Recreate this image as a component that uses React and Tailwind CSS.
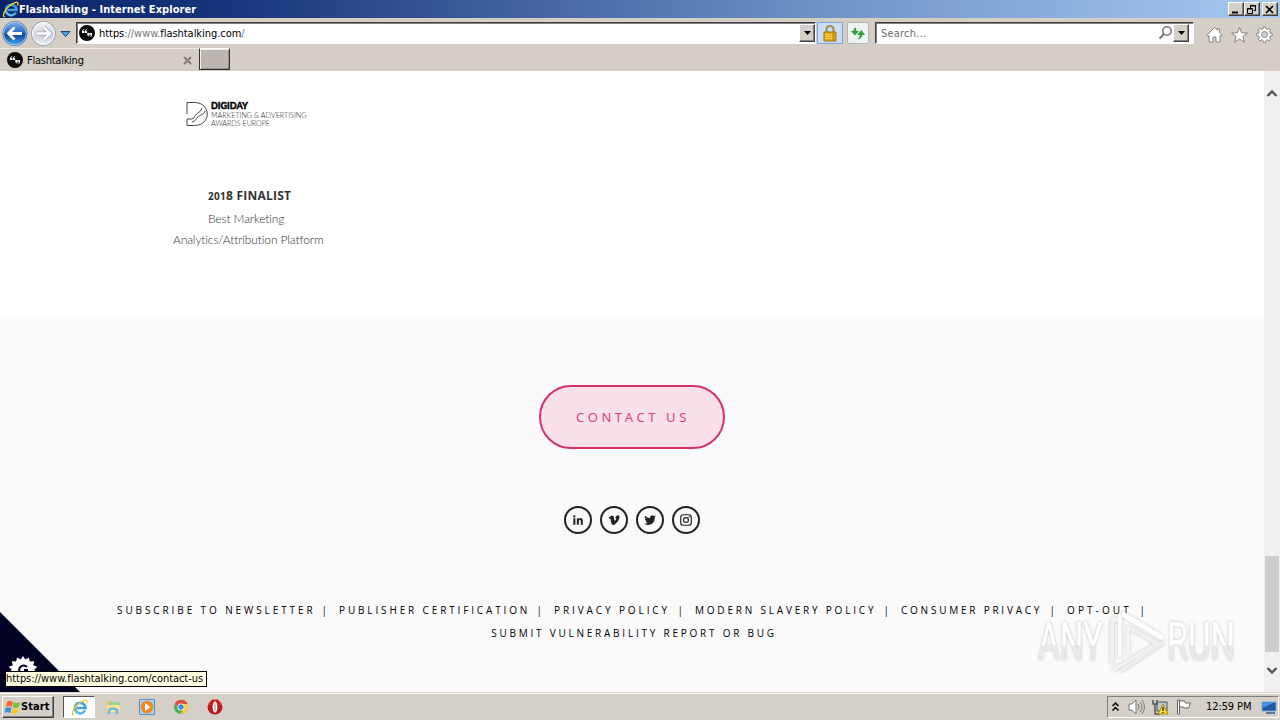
const footerLinks = [
  { label: 'SUBSCRIBE TO NEWSLETTER', width: 'w-[206px]', spacing: 'tracking-[2.9px]' },
  { label: 'PUBLISHER CERTIFICATION', width: 'w-[199px]', spacing: 'tracking-[2.86px]' },
  { label: 'PRIVACY POLICY', width: 'w-[125px]', spacing: 'tracking-[2.9px]' },
  { label: 'MODERN SLAVERY POLICY', width: 'w-[190px]', spacing: 'tracking-[2.8px]' },
  { label: 'CONSUMER PRIVACY', width: 'w-[150px]', spacing: 'tracking-[2.77px]' },
  { label: 'OPT-OUT', width: 'w-[74px]', spacing: 'tracking-[3.1px]' },
]

const raised =
  'border border-t-white border-l-white border-r-[#404040] border-b-[#404040] bg-[#d4d0c8] shadow-[inset_-1px_-1px_0_#808080]'

function IeLogo({ size }) {
  return (
    <svg width={size} height={size} viewBox="0 0 18 18" className="shrink-0">
      <path
        d="M14.700 12.200A5.600 5.600 0 1 1 15.300 9.500H6"
        fill="none"
        stroke="#3d9fdf"
        strokeWidth="2.800"
      />
      <path d="M13.500 13A5.500 5.500 0 0 1 4 11.500" fill="none" stroke="#8adcf8" strokeWidth="1" />
      <path
        d="M3.200 16.600C-.5 17 2.200 9.500 8 5c4-3.200 8.500-4.700 9-2.800.2.900-.2 1.800-.8 2.700"
        fill="none"
        stroke="#f0c93a"
        strokeWidth="1.400"
      />
    </svg>
  )
}

function SiteIcon() {
  return (
    <svg width="16" height="16" viewBox="0 0 16 16" className="shrink-0">
      <circle cx="8" cy="8" r="8" fill="#080808" />
      <path
        d="M5.200 4C3.700 4.500 3 5.500 3 7v1h2.300V6H4.200c.1-.7.5-1.100 1-1.300zM8 4c-1.500.5-2.200 1.500-2.200 3v1h2.300V6H7c.1-.7.5-1.100 1-1.300zM10.200 12c-1 .1-.9-.8 0-1.600H8.300V8h2.400v1.400c0 1.400-.6 2.200-1.700 2.700zM13 8v1.400c0 1.500-.6 2.300-1.700 2.800v-.8c.6-.3.8-.6.9-1.100h-1V8z"
        fill="#fff"
      />
    </svg>
  )
}

function WindowButton({ children }) {
  return (
    <span className={`flex h-[14px] w-4 items-center justify-center ${raised}`}>
      <svg width="12" height="11" viewBox="0 0 12 11" fill="none" stroke="#000">
        {children}
      </svg>
    </span>
  )
}

function DropButton() {
  return (
    <span className={`flex h-[18px] w-4 shrink-0 items-center justify-center ${raised}`}>
      <svg width="7" height="4" viewBox="0 0 7 4">
        <path d="M0 0h7L3.500 4z" fill="#000" />
      </svg>
    </span>
  )
}

function TitleBar() {
  return (
    <header className="flex h-[18px] shrink-0 items-center bg-[linear-gradient(90deg,#0a246a_0%,#16357b_18%,#7194c8_65%,#a6caf0_100%)] pr-[2px] pl-[2px]">
      <IeLogo size={17} />
      <span className="pt-[2px] text-[11px] font-bold tracking-[0.05px] text-white">
        Flashtalking - Internet Explorer
      </span>
      <div className="ml-auto flex">
        <WindowButton>
          <path d="M2 8.500h6" strokeWidth="2" />
        </WindowButton>
        <WindowButton>
          <path d="M4.500 4V1.500h5v5H7.500M4 2h6M1.500 4.500h5v5h-5zM1 5h6" />
        </WindowButton>
        <span className="w-[2px]" />
        <WindowButton>
          <path d="M2 2l7 7M9 2L2 9" strokeWidth="1.700" />
        </WindowButton>
      </div>
    </header>
  )
}

function NavArrows() {
  return (
    <svg width="76" height="30" viewBox="0 0 76 30" className="shrink-0">
      <defs>
        <linearGradient id="back" x1="0" y1="0" x2="0" y2="1">
          <stop offset="0" stopColor="#86b4e8" />
          <stop offset=".45" stopColor="#2b6cc4" />
          <stop offset=".55" stopColor="#0b4299" />
          <stop offset="1" stopColor="#4fb0f5" />
        </linearGradient>
        <linearGradient id="forward" x1="0" y1="0" x2="0" y2="1">
          <stop offset="0" stopColor="#f3f4f6" />
          <stop offset=".6" stopColor="#cbd2dc" />
          <stop offset="1" stopColor="#eef3f9" />
        </linearGradient>
      </defs>
      <circle cx="15" cy="15.500" r="12.200" fill="url(#back)" stroke="#6d86a8" />
      <circle cx="15" cy="15.500" r="11.300" fill="none" stroke="#b9d4f3" strokeWidth=".8" />
      <path d="M22 15.500H9M14.500 9.500l-6 6 6 6" fill="none" stroke="#fff" strokeWidth="2.800" />
      <circle cx="43.500" cy="15.500" r="12" fill="url(#forward)" stroke="#8d98a8" />
      <circle cx="43.500" cy="15.500" r="11" fill="none" stroke="#fff" />
      <path d="M37 15.500h12M44 9.500l6 6-6 6" fill="none" stroke="#9aa6b6" strokeWidth="4" />
      <path d="M37 15.500h12M44 9.500l6 6-6 6" fill="none" stroke="#fff" strokeWidth="2.600" />
      <path d="M61 13.500h9l-4.500 5z" fill="#4c9fdd" stroke="#174a83" strokeWidth="1" />
    </svg>
  )
}

function AddressRow() {
  const sunken = 'border border-t-[#404040] border-l-[#404040] border-r-white border-b-white bg-white shadow-[inset_1px_1px_0_#808080]'
  return (
    <div className="flex h-[30px] shrink-0 pt-[4px]">
      <div className="-mt-[4px]">
        <NavArrows />
      </div>
      <div className={`flex h-[22px] w-[740px] items-center pl-[2px] ${sunken}`}>
        <SiteIcon />
        <span className="ml-[4px] pt-[2px] text-[11px] tracking-[-0.05px] text-[#777]">
          <span className="text-black">https</span>://www.<span className="text-black">flashtalking.com</span>/
        </span>
        <span className="ml-auto">
          <DropButton />
        </span>
      </div>
      <div className="ml-[1px] flex h-[22px] w-[26px] items-center justify-center border border-[#7da7d9] bg-[#c9def5]">
        <svg width="14" height="17" viewBox="0 0 14 17">
          <path d="M3.500 8V4.500a3.500 3.500 0 0 1 7 0V8" fill="none" stroke="#a08a4a" strokeWidth="2" />
          <path d="M1 7h12v9H1z" fill="#e2a719" stroke="#a57416" />
          <path d="M2 9.500h10M2 11.500h10M2 13.500h10" stroke="#ffcf51" />
          <path d="M9 8h3v8H9z" fill="#b57a12" opacity=".5" />
        </svg>
      </div>
      <div className="ml-[4px] flex h-[22px] w-[22px] items-center justify-center rounded-[2px] border border-[#b0b5b8] bg-[#eef2f1]">
        <svg width="16" height="15" viewBox="0 0 16 15" fill="#2e9e3b">
          <path d="M5.500 1.500C4 2 3.500 3 3.500 5H.8L5 9.500 9 5H6.200c0-1.500 0-2.500-.7-3.500z" />
          <path d="M11.500 4L7 9h2.700c-.1 2-.5 3-2.200 4.500 3-.4 4.500-1.800 4.700-4.500H15z" />
        </svg>
      </div>
      <div className={`ml-[6px] flex h-[22px] w-[319px] items-center pr-[4px] pl-[5px] ${sunken}`}>
        <span className="pt-[2px] text-[11px] tracking-[0.2px] text-[#6d6d6d]">Search...</span>
        <svg width="15" height="16" viewBox="0 0 15 16" className="ml-auto" fill="none" stroke="#777">
          <circle cx="9" cy="6" r="4.200" strokeWidth="1.600" />
          <path d="M6 9l-4.500 4.500" strokeWidth="2" />
        </svg>
        <DropButton />
      </div>
      <div className="ml-[12px] flex items-center gap-[8px]">
        <svg width="17" height="18" viewBox="0 0 17 18" fill="#fff" stroke="#858585">
          <path d="M.8 9.200L8.500 1.500l2.800 2.800V2.500h2v3.800l3 3-1.300 1.200-1-1V16h-4v-5H7v5H3V9.500l-1 1z" />
        </svg>
        <svg width="17" height="18" viewBox="0 0 17 18" fill="#fff" stroke="#858585">
          <path d="M8.500 1.300l2.100 5.400 5.800.3-4.500 3.600 1.500 5.600-4.900-3.200-4.900 3.200 1.500-5.600L.6 7l5.800-.3z" />
        </svg>
        <svg width="17" height="18" viewBox="0 0 17 18" fill="#fff" stroke="#858585">
          <path d="M7.300 1h2.400l.4 2 1.300.5 1.700-1.200 1.700 1.700-1.200 1.700.6 1.300 2 .4v2.400l-2 .4-.6 1.300 1.200 1.700-1.700 1.700-1.700-1.200-1.300.6-.4 2H7.300l-.4-2-1.300-.6-1.700 1.200-1.700-1.700 1.200-1.700-.6-1.300-2-.4V7.400l2-.4.6-1.300L2.200 4l1.700-1.700 1.700 1.200L6.900 3z" />
          <circle cx="8.500" cy="8.500" r="3" fill="#d4d0c8" />
        </svg>
      </div>
    </div>
  )
}

function TabRow() {
  return (
    <div className="flex h-[23px] shrink-0">
      <div className="flex h-[23px] w-[199px] items-center border-t border-white/60 pr-[7px] pl-[7px]">
        <SiteIcon />
        <span className="ml-[4px] pt-[2px] text-[11px] tracking-[-0.25px] text-black">Flashtalking</span>
        <svg width="9" height="9" viewBox="0 0 9 9" className="ml-auto">
          <path d="M1 1l7 7M8 1L1 8" stroke="#858078" strokeWidth="2" />
        </svg>
      </div>
      <div className="h-[22px] w-[31px] border border-t-white border-r-[#303030] border-b-[#303030] border-l-[#303030] bg-[#bdb5b0] shadow-[inset_1px_1px_0_#f2eeeb,inset_-1px_-1px_0_#989088]" />
    </div>
  )
}

function DigidayLogo() {
  return (
    <svg width="130" height="28" viewBox="0 0 130 28" className="block">
      <path
        d="M1 13V1.500h7.500c17 0 17 23 0 23H1V18h4.500c3.500 0 2.600-3.500 5.800-5.700 2.300-1.600 4.200-2.300 4.500-5M6 21c4-.5 3.500-3.500 6.300-5.400 3.200-2.100 6.700-3 6.700-6"
        fill="none"
        stroke="#444"
        strokeWidth="1"
      />
      <g fontFamily="Lato, sans-serif" fill="#222">
        <text x="25" y="8" fontSize="9.500" fontWeight="900" fill="#000" stroke="#000" strokeWidth=".4" textLength="37" lengthAdjust="spacingAndGlyphs">
          DIGIDAY
        </text>
        <text x="25" y="16.500" fontSize="8" fontWeight="300" textLength="95.500" lengthAdjust="spacingAndGlyphs">
          MARKETING &amp; ADVERTISING
        </text>
        <text x="25" y="24.500" fontSize="8" fontWeight="300" textLength="59" lengthAdjust="spacingAndGlyphs">
          AWARDS EUROPE
        </text>
      </g>
    </svg>
  )
}

function SocialIcon({ children }) {
  return (
    <span className="flex h-7 w-7 items-center justify-center rounded-full border-2 border-[#222]">
      <svg width="14" height="14" viewBox="0 0 24 24" fill="#222">
        {children}
      </svg>
    </span>
  )
}

function Footer() {
  return (
    <footer className="flex flex-1 flex-col items-center bg-[#fafafa] pt-[68px] font-['Open_Sans',sans-serif]">
      <button className="h-16 w-[186px] rounded-full border-2 border-[#d9306c] bg-[#fae1e9] pt-[2px] pl-[2px] font-['Noto_Sans',sans-serif] text-[13px] tracking-[3.6px] text-[#da4179]">
        CONTACT US
      </button>
      <div className="mt-[57px] flex gap-2">
        <SocialIcon>
          <path d="M4 9h3.500v11H4zM5.700 3.700a2 2 0 1 1 0 4.100 2 2 0 0 1 0-4.100zM10 9h3.300v1.500c2-3 7-2.300 7 3V20h-3.500v-5.800c0-3.300-3.300-3-3.300 0V20H10z" />
        </SocialIcon>
        <SocialIcon>
          <path d="M3 8.200c2-1.700 4-4 5.800-4.100 2.100-.2 2.800 1.600 3.200 4.700.8 5.300 1.400 5.700 3 2.900 1.200-2 1-3.600-1.200-2.800C14.700 5.800 16.800 4 19.200 4c2.300.1 2.400 2.300 2 4.500-.9 4.500-7.200 12.200-10.700 12.200-3.200 0-3.700-7.200-4.800-10.700-.3-1-.8-.7-1.900.1z" />
        </SocialIcon>
        <SocialIcon>
          <path d="M22 6a8 8 0 0 1-2.300.6 4 4 0 0 0 1.800-2.200 8 8 0 0 1-2.600 1 4.100 4.100 0 0 0-7 3.700A11.500 11.500 0 0 1 3.600 4.800a4.100 4.100 0 0 0 1.200 5.500c-.7 0-1.300-.2-1.800-.5a4.100 4.100 0 0 0 3.300 4.100c-.6.200-1.200.2-1.800.1a4.100 4.100 0 0 0 3.800 2.800A8.200 8.200 0 0 1 2 18.500c8.700 5.300 18-.2 18-9.500v-1a8 8 0 0 0 2-2z" />
        </SocialIcon>
        <SocialIcon>
          <rect x="3" y="3" width="18" height="18" rx="4.500" fill="none" stroke="#222" strokeWidth="2" />
          <circle cx="12" cy="12" r="4.200" fill="none" stroke="#222" strokeWidth="2" />
          <circle cx="17.300" cy="6.700" r="1.200" />
        </SocialIcon>
      </div>
      <nav className="mt-[65px] flex flex-col items-center text-[10px] leading-[23px] font-normal text-black">
        <div className="flex gap-4 pr-[6px]">
          {footerLinks.map((link) => (
            <span key={link.label} className={`flex justify-between whitespace-nowrap ${link.width} ${link.spacing}`}>
              {link.label}
              <span className="-mr-[4px] tracking-normal">|</span>
            </span>
          ))}
        </div>
        <span className="pl-1 tracking-[2.77px]">SUBMIT VULNERABILITY REPORT OR BUG</span>
      </nav>
    </footer>
  )
}

function Scrollbar() {
  return (
    <div className="flex w-4 shrink-0 flex-col items-center bg-[#f0f0f0] pt-[17px] pb-[16px]">
      <svg width="12" height="10" viewBox="0 0 12 10" fill="none" stroke="#555" strokeWidth="2.400">
        <path d="M1.500 8L6 3.500 10.500 8" />
      </svg>
      <div className="mt-auto mb-[14px] h-[96px] w-[14px] bg-[#cdcdcd]" />
      <svg width="12" height="10" viewBox="0 0 12 10" fill="none" stroke="#555" strokeWidth="2.400">
        <path d="M1.500 2L6 6.500 10.500 2" />
      </svg>
    </div>
  )
}

function Watermark() {
  return (
    <svg width="210" height="76" viewBox="0 0 210 76" className="pointer-events-none absolute right-[40px] bottom-[14px]">
      <defs>
        <linearGradient id="mark" x1="0" y1="0" x2="0" y2="1">
          <stop offset=".55" stopColor="#fff" />
          <stop offset=".56" stopColor="#e9e9e9" />
        </linearGradient>
        <filter id="glow" x="-20%" y="-20%" width="140%" height="140%">
          <feDropShadow dx="0" dy="0" stdDeviation="1.800" floodColor="#777" floodOpacity=".45" />
        </filter>
      </defs>
      <g filter="url(#glow)">
        <g fill="url(#mark)" fontFamily="'Roboto', sans-serif" fontSize="53" fontWeight="400">
          <text x="8" y="58" textLength="65" lengthAdjust="spacingAndGlyphs">ANY</text>
          <text x="137" y="58" textLength="68" lengthAdjust="spacingAndGlyphs">RUN</text>
        </g>
        <g fill="none" strokeLinecap="round" strokeLinejoin="round">
          <path d="M82 60V22c0-4 4-6 5-4" stroke="#f1f1f1" strokeWidth="4" />
          <path d="M90 14v40" stroke="#fafafa" strokeWidth="4" />
          <path d="M94 13l37 22" stroke="#fff" strokeWidth="5" />
          <path d="M98 25l29 16.500-43 26" stroke="#f1f1f1" strokeWidth="3.500" />
          <path d="M98 25v26" stroke="#f6f6f6" strokeWidth="3" />
          <path d="M132 41L92 68" stroke="#ededed" strokeWidth="4" />
        </g>
      </g>
    </svg>
  )
}

function PageView() {
  return (
    <main className="relative flex min-h-0 flex-1">
      <div className="flex flex-1 flex-col bg-white">
        <section className="h-[246px] shrink-0 pt-[30px] font-['Lato',sans-serif]">
          <div className="pl-[186px]">
            <DigidayLogo />
          </div>
          <div className="mt-[56px] w-[330px] pl-[173px] leading-[21.500px] text-[#333]">
            <p className="pl-[35px] font-['Open_Sans',sans-serif] text-[12px] font-bold tracking-[0.25px]">
              <span className="text-[10px]">201</span>8 FINALIST
            </p>
            <p className="pl-[35px] text-[12px] font-light tracking-[-0.12px]">Best Marketing</p>
            <p className="text-[12px] font-light tracking-[-0.12px] whitespace-nowrap">Analytics/Attribution Platform</p>
          </div>
        </section>
        <Footer />
      </div>
      <Scrollbar />
      <svg width="80" height="80" viewBox="0 0 80 80" className="absolute bottom-0 left-0">
        <path d="M0 0l80 80H0z" fill="#020223" />
        <path
          d="M23 44l2.200 3.400 3.800-2 .8 4 4.400-.2-1 4 4 1.600-3 3 3 3-4 1.700 1 4-4.400-.1-.8 4-3.800-2-2.200 3.400-2.200-3.400-3.800 2-.8-4-4.400.1 1-4-4-1.700 3-3-3-3 4-1.600-1-4 4.400.2.8-4 3.800 2z"
          fill="#fff"
        />
        <path d="M27 55a4.500 4.500 0 1 0 0 6v-3h-3" fill="none" stroke="#020223" strokeWidth="2" />
      </svg>
      <div className="absolute bottom-[5px] left-[5px] flex h-4 w-[202px] items-center border border-black bg-[#ffffe1] text-[11px] tracking-[-0.05px] whitespace-nowrap text-black">
        https://www.flashtalking.com/contact-us
      </div>
      <Watermark />
    </main>
  )
}

function Taskbar() {
  return (
    <div className="flex h-7 shrink-0 items-center border-t border-[#d4d0c8] bg-[#d4d0c8] pr-[1px] pl-[2px] shadow-[inset_0_1px_0_#fff]">
      <button className={`mt-[1px] flex h-[22px] w-[52px] items-center pl-[2px] text-[11px] font-bold text-black ${raised}`}>
        <svg width="16" height="15" viewBox="0 0 16 15" className="shrink-0">
          <path d="M2 2c2-2 4-1 6 0L6.700 7C5 6 3 5.500.8 7z" fill="#f16b32" />
          <path d="M9 2.300c2 1 4 1 6-.3L13.700 7c-2 1.200-4 1.200-6 0z" fill="#7abc3b" />
          <path d="M.7 8c2-1.300 4-1 5.800 0L5.300 13c-2-1-4-1-6 0z" fill="#3b91dd" />
          <path d="M7.500 8.300c2 1 4 1 6-.2l-1.300 5c-2 1.300-4 1.200-6 0z" fill="#f8c62b" />
        </svg>
        <span className="tracking-[0.1px]">Start</span>
      </button>
      <div className="mt-[1px] ml-[9px] flex h-[22px] w-[32px] items-center justify-center border border-t-[#555] border-r-white border-b-white border-l-[#555] bg-white">
        <IeLogo size={17} />
      </div>
      <div className="ml-[10px] flex items-center gap-[18px]">
        <svg width="16" height="16" viewBox="0 0 16 16">
          <path d="M1 2h5l1 1h6v10H1z" fill="#e7c867" />
          <path d="M4 3h11v5H4z" fill="#96d695" />
          <path d="M1 6h14l-1 7H2z" fill="#f8e49a" />
          <path d="M4 15v-4q4-3 8 0v4" fill="none" stroke="#68b8e2" strokeWidth="2.500" />
        </svg>
        <svg width="16" height="16" viewBox="0 0 16 16">
          <path d="M.5.500h15v15H.5z" fill="#a9d3ef" stroke="#5b92bb" />
          <circle cx="8" cy="8" r="6.300" fill="#f08a20" />
          <path d="M6 4l5.500 4L6 12z" fill="#fff" />
        </svg>
        <svg width="16" height="16" viewBox="0 0 16 16">
          <circle cx="8" cy="8" r="7" fill="#4eae50" />
          <path d="M1.900 4.500A7 7 0 0 1 14.500 5H8a3 3 0 0 0-3 3z" fill="#df4b3e" />
          <path d="M8 5h6.500A7 7 0 0 1 7.500 15l3.300-5.500A3 3 0 0 0 8 5z" fill="#f7ce3e" />
          <circle cx="8" cy="8" r="3.500" fill="#fff" />
          <circle cx="8" cy="8" r="2.700" fill="#4287df" />
        </svg>
        <svg width="16" height="16" viewBox="0 0 16 16">
          <circle cx="8" cy="8" r="7.500" fill="#bd1820" />
          <path d="M2 6a6 6 0 0 1 12 0" fill="none" stroke="#ef6866" />
          <ellipse cx="8" cy="8" rx="2.400" ry="5.700" fill="#fff" />
          <ellipse cx="8" cy="8" rx=".7" ry="4.500" fill="#aaa" />
        </svg>
      </div>
      <div className="mt-[1px] ml-auto flex h-[22px] w-[172px] items-center border border-t-[#808080] border-r-white border-b-white border-l-[#808080] pl-[4px]">
        <svg width="7" height="10" viewBox="0 0 7 10" fill="none" stroke="#000" strokeWidth="1.500">
          <path d="M.5 4l3-3 3 3M.5 8.500l3-3 3 3" />
        </svg>
        <svg width="17" height="16" viewBox="0 0 17 16" className="ml-[9px]" fill="#fff" stroke="#777">
          <path d="M1 5h3l4-4v14l-4-4H1z" />
          <path d="M10 5q2 3 0 6M12 3q4 5 0 10M14 1q5 7 0 14" fill="none" />
        </svg>
        <svg width="17" height="16" viewBox="0 0 17 16" className="ml-[7px]">
          <path d="M5 3h10v9H5z" fill="#bcc9d3" stroke="#555" />
          <path d="M1 1v4h4V1M3 5v10h5" fill="none" stroke="#555" strokeWidth="1.500" />
          <path d="M11 5l5 10H6z" fill="#ffdc36" stroke="#ad850c" />
          <path d="M11 8v4M11 13v1" stroke="#222" strokeWidth="1.300" />
        </svg>
        <svg width="17" height="16" viewBox="0 0 17 16" className="ml-[7px]" fill="#fff" stroke="#666">
          <path d="M1.500 15V1h2v14zM3.500 2h5l1 2h5l-2 5H8L7 8H3.500z" />
        </svg>
        <span className="ml-[13px] pt-[1px] text-[11px] tracking-[-0.1px] whitespace-nowrap text-black">12:59 PM</span>
        <svg width="17" height="15" viewBox="0 0 17 15" className="ml-auto shrink-0">
          <path d="M1 2h14v9H1z" fill="#1959a6" stroke="#7ba7d4" />
          <path d="M1 2h13L2 8z" fill="#4b8fe0" />
          <path d="M5 13h9" stroke="#375d86" strokeWidth="1.500" />
        </svg>
      </div>
    </div>
  )
}

function App() {
  return (
    <div className="flex h-[720px] w-[1280px] flex-col overflow-hidden bg-[#d4cec6] font-['DejaVu_Sans_Condensed','DejaVu_Sans',sans-serif]">
      <TitleBar />
      <AddressRow />
      <TabRow />
      <PageView />
      <Taskbar />
    </div>
  )
}

export default App
